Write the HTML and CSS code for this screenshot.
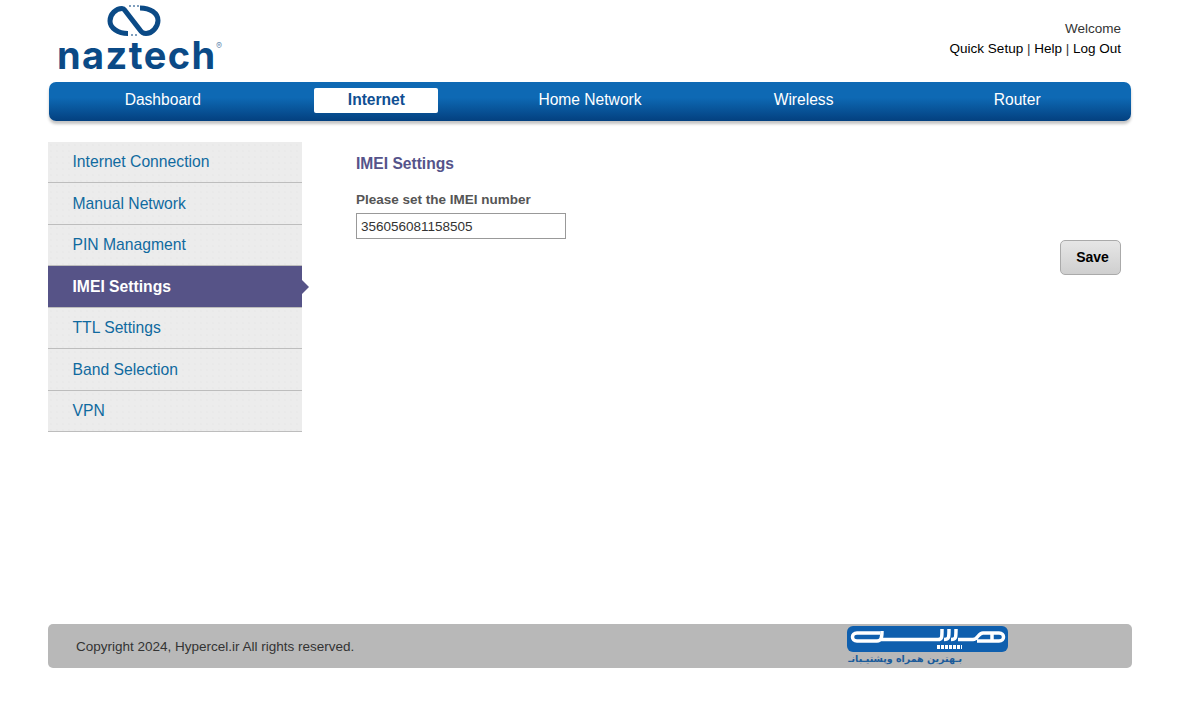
FILE: index.html
```html
<!DOCTYPE html>
<html lang="en">
<head>
<meta charset="utf-8">
<title>IMEI Settings</title>
<link rel="stylesheet" href="styles.css">
</head>
<body>
<div class="page">
  <header class="top">
    <div class="brand">
      <svg class="mark" width="54" height="33" viewBox="0 0 54 33">
        <path d="M21 29.500 C11 29.500 3 24 3 17 C3 10 9 4.500 15 4.500 C16.500 4.500 17 5 18 6.500 L33 26 C34.500 28.500 36 29.500 39 29.500 C45 29.500 51 23 51 16.500 C51 9 43 4 33 4" fill="none" stroke="#0b4a86" stroke-width="5"/>
        <path d="M22 2h2M26 2h2M30 2h2M24 31h2M28 31h2" stroke="#7f9fbe" stroke-width="2"/>
      </svg>
      <div class="word">naztech<span class="reg">®</span></div>
    </div>
    <div class="account">
      <div class="welcome">Welcome</div>
      <div class="links"><a>Quick Setup</a> | <a>Help</a> | <a>Log Out</a></div>
    </div>
  </header>

  <nav class="nav">
    <div class="nav-item"><span>Dashboard</span></div>
    <div class="nav-item active"><span>Internet</span></div>
    <div class="nav-item"><span>Home Network</span></div>
    <div class="nav-item"><span>Wireless</span></div>
    <div class="nav-item"><span>Router</span></div>
  </nav>

  <main class="main">
    <aside class="side">
      <div class="side-item">Internet Connection</div>
      <div class="side-item">Manual Network</div>
      <div class="side-item">PIN Managment</div>
      <div class="side-item current">IMEI Settings</div>
      <div class="side-item">TTL Settings</div>
      <div class="side-item">Band Selection</div>
      <div class="side-item">VPN</div>
    </aside>
    <section class="content">
      <h1 class="title">IMEI Settings</h1>
      <label class="label">Please set the IMEI number</label>
      <input class="field" type="text" value="356056081158505">
      <div class="actions"><button class="save">Save</button></div>
    </section>
  </main>

  <footer class="foot">
    <div class="copy">Copyright 2024, Hypercel.ir All rights reserved.</div>
    <div class="partner">
      <svg class="partner-mark" width="161" height="26" viewBox="0 0 161 26">
        <rect width="161" height="26" rx="6" fill="#0f5fae"/>
        <path d="M33 7 L10 7 C4 7 4 15 10 15 L30 15 C34 15 35 12 35 5 M34 13.500 L91 13.500 C95 13.500 95 12 95 3 M97 13.500 C102 13.500 102 12 102 3 M104 13.500 C109 13.500 109 12 109 3 M111 13.500 L126 13.500 M126 13.500 C131 13.500 131 7 136 7 L152 7 C158 7 158 15 152 15 L130 15 M145 7 L145 15" fill="none" stroke="#fff" stroke-width="3.500"/>
        <path d="M90 21 H115" fill="none" stroke="#fff" stroke-width="4" stroke-dasharray="3 1"/>
      </svg>
      <div class="partner-text" dir="rtl">بـهترین همراه وپشتیـبانـ</div>
    </div>
  </footer>
</div>
</body>
</html>
```
FILE: styles.css
```css
* { box-sizing: border-box; }
html, body { margin: 0; padding: 0; background: #fff; }
body { font-family: "Liberation Sans", Arial, sans-serif; font-size: 13.5px; color: #333; }
.page { width: 1084px; margin-left: 48px; height: 703px; }

.top { height: 82px; display: flex; justify-content: space-between; padding: 0 11px 0 10px; }
.brand { width: 170px; position: relative; padding-top: 4px; }
.mark { display: block; margin-left: 49px; }
.word { font-family: Inter, sans-serif; font-weight: 700; font-size: 38px; line-height: 32px; letter-spacing: 1.4px; color: #0b4a86; margin-top: 2px; margin-left: -1px; white-space: nowrap; }
.reg { position: absolute; font-size: 9px; line-height: 10px; letter-spacing: 0; color: #6f93b5; font-weight: 400; top: 41px; left: 158px; }
.account { text-align: right; padding-top: 18.5px; line-height: 20px; }
.welcome { color: #333; }
.links a { color: #000; }

.nav { margin: 0 1px; height: 39px; padding: 0 7px; display: flex; border-radius: 7px; background: linear-gradient(#0e69b4 0%, #0e69b4 40%, #03407f 100%); box-shadow: 0 3px 3px #c4c4c4; }
.nav-item { flex: 1; display: flex; justify-content: center; align-items: center; padding-bottom: 2px; color: #fff; font-size: 15.6px; }
.nav-item span { display: block; height: 25px; line-height: 23px; min-width: 124px; text-align: center; border-radius: 2px; }
.active span { background: #fff; color: #0f4f92; font-weight: 700; }

.main { height: 503px; display: flex; padding-top: 20.5px; }
.side { width: 254px; flex: none; }
.side-item { height: 41.5px; padding: 0.5px 0 0 24.5px; line-height: 40px; font-size: 15.7px; color: #106a9f; border-bottom: 1px solid #bdbdbd; background-color: #ececec; background-image: radial-gradient(#e5e5e5 0.6px, transparent 0.8px); background-size: 6px 6px; }
.current { position: relative; background: #565387; color: #fff; font-weight: 700; }
.current::after { content: ""; position: absolute; left: 100%; top: 14px; border-left: 7px solid #565387; border-top: 7px solid transparent; border-bottom: 7px solid transparent; }

.content { flex: 1; padding: 13px 11px 0 54px; }
.title { margin: 0; font-size: 15.6px; line-height: 18px; font-weight: 700; color: #55538a; }
.label { display: block; margin-top: 18px; font-weight: 700; color: #555; line-height: 18px; }
.field { display: block; width: 210px; height: 26px; margin-top: 4px; padding: 1px 4px 0; border: 1px solid #999; font: 13.5px "Liberation Sans", Arial, sans-serif; color: #333; outline: none; }
.actions { display: flex; justify-content: flex-end; }
.save { width: 61px; height: 35px; margin-top: 1px; border: 1px solid #aaa; border-radius: 5px; background: linear-gradient(#e6e6e6, #cfcfcf); font: 700 14px "Liberation Sans", Arial, sans-serif; color: #000; padding: 0 0 1px 4px; }

.foot { height: 44px; display: flex; align-items: center; position: relative; background: #b8b8b8; border-radius: 5px; padding-left: 28px; }
.copy { color: #333; }
.partner { position: absolute; left: 799px; top: 2px; width: 161px; }
.partner-mark { display: block; }
.partner-text { width: 115px; font-family: "DejaVu Sans", sans-serif; font-weight: 700; font-size: 9.5px; line-height: 13px; color: #1a5a9a; white-space: nowrap; }
```
